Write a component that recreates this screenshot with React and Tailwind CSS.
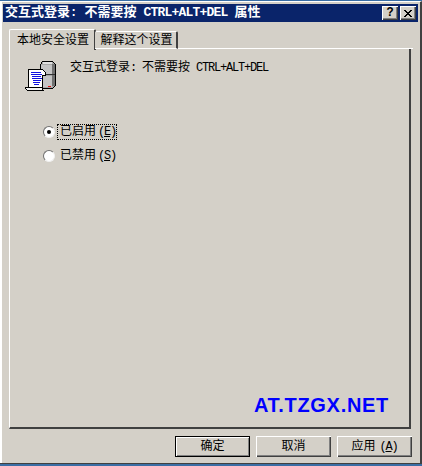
const Lat = ({ children }) => <span className="tracking-[-1.2px]">{children}</span>;

function RaisedButton({ children, isDefault }) {
  return (
    <button
      className={`w-[75px] h-[21px] flex items-center justify-center text-[12px] text-black bg-[#d4d0c8] ${
        isDefault
          ? 'border border-black shadow-[inset_1px_1px_0_#fff,inset_-1px_-1px_0_#808080]'
          : 'shadow-[inset_1px_1px_0_#fff,inset_-1px_-1px_0_#404040,inset_-2px_-2px_0_#808080]'
      }`}
    >
      {children}
    </button>
  );
}

function TitleButton({ children }) {
  return (
    <div className="w-[16px] h-[14px] bg-[#d4d0c8] flex items-center justify-center text-black shadow-[inset_1px_1px_0_#fff,inset_-1px_-1px_0_#404040,inset_-2px_-2px_0_#808080]">
      {children}
    </div>
  );
}

function ServerIcon() {
  return (
    <svg width="31" height="30" viewBox="0 0 31 30" shapeRendering="crispEdges" className="shrink-0">
      {/* server tower, two stacked boxes */}
      <path d="M17.5 .5h10l2.5 2.5v22l-2.5 2.5h-12v-24z" fill="#a8a8a8" stroke="#000" strokeWidth="1" />
      <path d="M18 1h9v2h-9z" fill="#e0e0e0" />
      <path d="M16 4h11v9h-11z" fill="#c4c4c4" />
      <path d="M27 3h3v22h-3z" fill="#707070" />
      <path d="M16 13h14v1h-14z" fill="#303030" />
      <path d="M16 15h11v11h-11z" fill="#c4c4c4" />
      <path d="M23 25h3v1h-3z" fill="#e01010" />
      {/* paper scroll */}
      <path d="M3.5 8.5h14l3 3v3h-3v12h-14z" fill="#fff" stroke="#000" strokeWidth="1" />
      <path d="M.5 26.5h17v2l1 1h-16l-2-2z" fill="#f4f4f4" stroke="#000" strokeWidth="1" />
      <path d="M6 11h10v1h-10zM6 13h11v1h-11zM7 15h9v1h-9zM7 17h10v1h-10zM8 19h8v1h-8zM8 21h7v1h-7zM9 23h5v1h-5z" fill="#1010e0" />
    </svg>
  );
}

function Radio({ checked }) {
  return (
    <span className="relative block w-[12px] h-[12px] rounded-full bg-white border border-t-[#707070] border-l-[#707070] border-r-[#f0f0f0] border-b-[#f0f0f0]">
      {checked && <span className="absolute left-[3px] top-[3px] w-[4px] h-[4px] rounded-full bg-black" />}
    </span>
  );
}

export default function App() {
  return (
    <div className="font-['Liberation_Mono','Noto_Sans_CJK_SC',monospace] w-[422px] h-[466px] flex flex-col bg-[#d4d0c8] text-black overflow-hidden border-t-[1px] border-[#3a6ea5]">
      <div className="flex-1 flex flex-col pl-[1px] pr-[2px] pt-[2px] border-l-2 border-r-2 border-t border-l-white border-r-[#404040] border-t-white">
        {/* title bar */}
        <div className="h-[18px] flex items-center justify-between bg-[#0a246a] pl-[2px] pr-[2px] text-white font-bold text-[13px] whitespace-nowrap">
          <span>
            交互式登录<span className="text-[12px]">: </span>不需要按<span className="tracking-[-0.8px]"> CTRL+ALT+DEL </span>属性
          </span>
          <div className="flex gap-[2px]">
            <TitleButton>
              <span className="text-[12px] font-bold leading-none">?</span>
            </TitleButton>
            <TitleButton>
              <svg width="8" height="7" viewBox="0 0 8 7" shapeRendering="crispEdges">
                <path d="M0 0l8 7M8 0l-8 7" stroke="#000" strokeWidth="1.5" />
              </svg>
            </TitleButton>
          </div>
        </div>

        {/* tabs */}
        <div className="flex items-end pl-[6px] pr-[5px] mt-[6px] h-[21px] relative z-10">
          <div className="h-[21px] w-[87px] -mb-px pl-[2px] pt-[1px] bg-[#d4d0c8] flex items-center justify-center text-[12px] rounded-t-[2px] border-t border-l border-t-white border-l-white border-r-2 border-r-[#404040]">
            本地安全设置
          </div>
          <div className="h-[18px] w-[83px] ml-[-1px] pl-[2px] pt-[2px] bg-[#d4d0c8] flex items-center justify-center text-[12px] rounded-t-[2px] border-t border-t-white border-r-2 border-r-[#404040] border-b border-b-white">
            解释这个设置
          </div>
          <div className="flex-1 border-b border-white" />
        </div>

        {/* panel */}
        <div className="ml-[6px] w-[402px] h-[380px] flex flex-col border-l border-white border-r-2 border-r-[#404040] border-b-2 border-b-[#404040]">
          <div className="flex items-start pl-[15px] pt-[12px]">
            <ServerIcon />
            <p className="ml-[14px] -mt-[2px] text-[12px] whitespace-nowrap">
              交互式登录<Lat>: </Lat>不需要按<Lat> CTRL+ALT+DEL</Lat>
            </p>
          </div>
          <div className="pl-[33px] mt-[34px] flex flex-col gap-[10px] text-[12px]">
            <div className="flex items-center gap-[3px] h-[14px]">
              <Radio checked />
              <span className="pl-[2px] leading-[14px] outline-1 outline-dotted outline-black">
                已启用<span className="ml-[2px]"><Lat>(<u>E</u>)</Lat></span>
              </span>
            </div>
            <div className="flex items-center gap-[3px] h-[14px]">
              <Radio />
              <span className="pl-[2px] leading-[14px]">
                已禁用<span className="ml-[2px]"><Lat>(<u>S</u>)</Lat></span>
              </span>
            </div>
          </div>
          <div className="mt-auto mb-[10px] mr-[20px] flex justify-end">
            <span className="font-['Liberation_Sans',sans-serif] font-bold text-[20px] leading-[24px] tracking-[0.7px] text-[#0000ff]">
              AT.TZGX.NET
            </span>
          </div>
        </div>

        {/* footer buttons */}
        <div className="mt-[7px] mr-[6px] flex justify-end gap-[6px]">
          <RaisedButton isDefault>确定</RaisedButton>
          <RaisedButton>取消</RaisedButton>
          <RaisedButton>
            应用<span className="ml-[4px]"><Lat>(<u>A</u>)</Lat></span>
          </RaisedButton>
        </div>
      </div>
      <div className="h-[3px] bg-[#d4d0c8] border-t border-[#404040] border-b-2 border-b-[#3a6ea5]" />
    </div>
  );
}
